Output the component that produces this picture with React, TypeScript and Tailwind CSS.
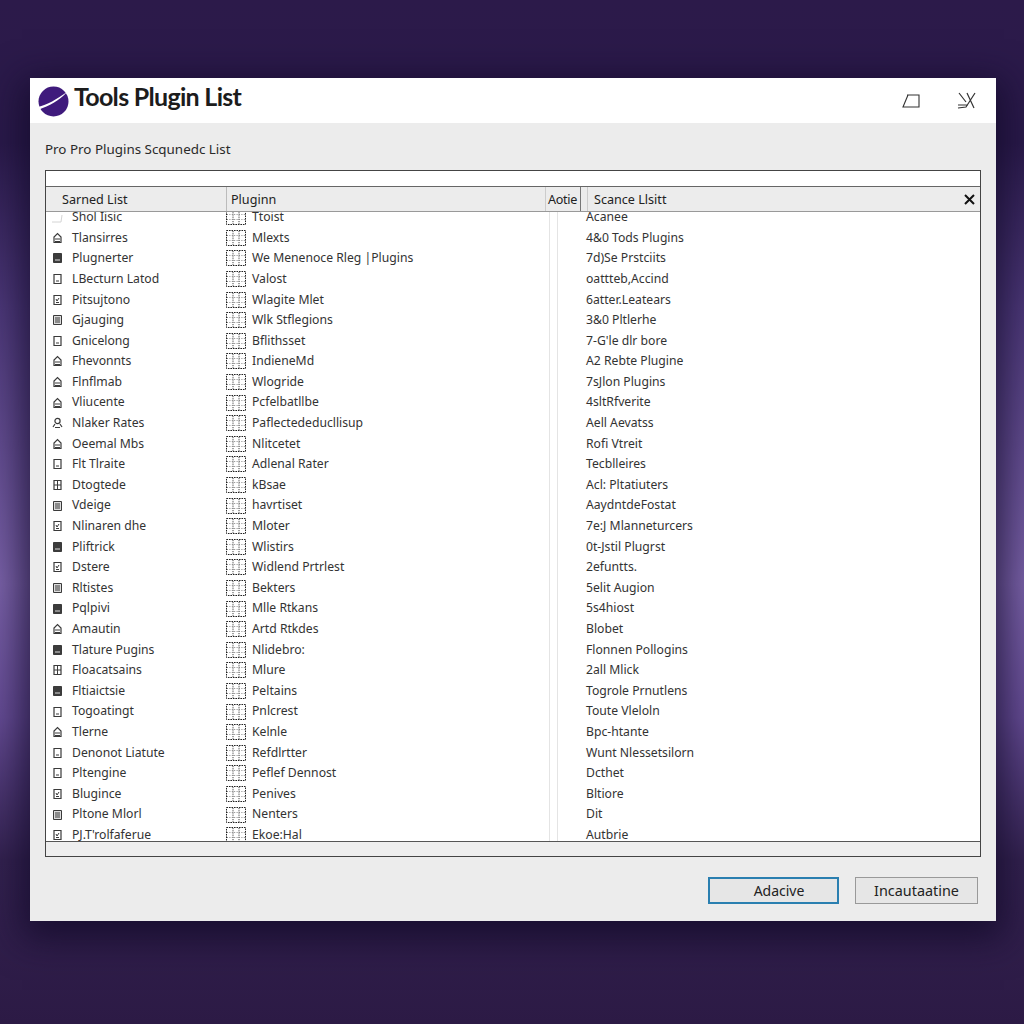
const rows: [string, string, string, string][] = [
  ["Shol Iisic", "Ttoist", "Acanee", "t"],
  ["Tlansirres", "Mlexts", "4&0 Tods Plugins", "a"],
  ["Plugnerter", "We Menenoce Rleg |Plugins", "7d)Se Prstciits", "f"],
  ["LBecturn Latod", "Valost", "oattteb,Accind", "o"],
  ["Pitsujtono", "Wlagite Mlet", "6atter.Leatears", "k"],
  ["Gjauging", "Wlk Stflegions", "3&0 Pltlerhe", "l"],
  ["Gnicelong", "Bflithsset", "7-G'le dlr bore", "o"],
  ["Fhevonnts", "IndieneMd", "A2 Rebte Plugine", "a"],
  ["Flnflmab", "Wlogride", "7sJlon Plugins", "a"],
  ["Vliucente", "Pcfelbatllbe", "4sltRfverite", "a"],
  ["Nlaker Rates", "Paflectededucllisup", "Aell Aevatss", "p"],
  ["Oeemal Mbs", "Nlitcetet", "Rofi Vtreit", "a"],
  ["Flt Tlraite", "Adlenal Rater", "Tecblleires", "o"],
  ["Dtogtede", "kBsae", "Acl: Pltatiuters", "g"],
  ["Vdeige", "havrtiset", "AaydntdeFostat", "l"],
  ["Nlinaren dhe", "Mloter", "7e:J Mlanneturcers", "k"],
  ["Pliftrick", "Wlistirs", "0t-Jstil Plugrst", "f"],
  ["Dstere", "Widlend Prtrlest", "2efuntts.", "k"],
  ["Rltistes", "Bekters", "5elit Augion", "l"],
  ["Pqlpivi", "Mlle Rtkans", "5s4hiost", "f"],
  ["Amautin", "Artd Rtkdes", "Blobet", "a"],
  ["Tlature Pugins", "Nlidebro:", "Flonnen Pollogins", "f"],
  ["Floacatsains", "Mlure", "2all Mlick", "g"],
  ["Fltiaictsie", "Peltains", "Togrole Prnutlens", "f"],
  ["Togoatingt", "Pnlcrest", "Toute Vleloln", "o"],
  ["Tlerne", "Kelnle", "Bpc-htante", "a"],
  ["Denonot Liatute", "Refdlrtter", "Wunt Nlessetsilorn", "o"],
  ["Pltengine", "Peflef Dennost", "Dcthet", "o"],
  ["Blugince", "Penives", "Bltiore", "k"],
  ["Pltone Mlorl", "Nenters", "Dit", "l"],
  ["PJ.T'rolfaferue", "Ekoe:Hal", "Autbrie", "k"],
];

function DocIcon({ kind }: { kind: string }) {
  const s = "#3a3a3a";
  return (
    <svg width="11" height="12" viewBox="0 0 11 12" className="shrink-0">
      {kind === "t" && <path d="M0 11h9L10 4" fill="none" stroke="#d4d4d4" />}
      {kind === "o" && (
        <>
          <path d="M2 1.5h7v9H2z" fill="none" stroke={s} strokeWidth="1.2" />
          <path d="M4 8h3" stroke={s} />
        </>
      )}
      {kind === "a" && (
        <>
          <path d="M2 10.5V5l3.5-3.5L9 5v5.5z" fill="none" stroke={s} strokeWidth="1.2" />
          <path d="M3 7h5M3 9.5h5" stroke={s} />
        </>
      )}
      {kind === "f" && (
        <>
          <path d="M1.5 1.5h8v9h-8z" fill="#3c3c3c" stroke={s} />
          <path d="M3 8h5" stroke="#ddd" />
        </>
      )}
      {kind === "k" && (
        <>
          <path d="M2 1.5h7v9H2z" fill="none" stroke={s} strokeWidth="1.2" />
          <path d="M4 5l1 2 2-3M4 8.5h3" fill="none" stroke={s} />
        </>
      )}
      {kind === "l" && (
        <>
          <path d="M1.5 1.5h8v9h-8z" fill="#dcdcdc" stroke={s} />
          <path d="M3 4h5M3 6h5M3 8h5" stroke={s} />
        </>
      )}
      {kind === "g" && (
        <>
          <path d="M2 1.5h7v9H2z" fill="none" stroke={s} strokeWidth="1.2" />
          <path d="M5.5 2v8M2 6h7" stroke={s} />
        </>
      )}
      {kind === "p" && (
        <>
          <circle cx="5.5" cy="4" r="2.6" fill="none" stroke={s} strokeWidth="1.2" />
          <path d="M1 10l2-3M10 10L8 7M3 10.5h5" fill="none" stroke={s} strokeWidth="1.2" />
        </>
      )}
    </svg>
  );
}

function GridIcon() {
  return (
    <svg width="20" height="16" viewBox="0 0 20 16" className="shrink-0">
      <rect x="0.5" y="0.5" width="19" height="15" fill="none" stroke="#222" strokeDasharray="1.6 0.9" />
      <path d="M7 1v14M13 1v14" stroke="#444" strokeDasharray="1.2 1" />
      <path d="M1 5.5h18M1 10.5h18" stroke="#888" strokeDasharray="1 1.4" />
    </svg>
  );
}

export default function App() {
  return (
    <div className="w-full h-[1024px] overflow-hidden pt-[78px] pl-[30px] bg-[linear-gradient(180deg,#2c1a4a_0%,#2a1a4a_14%,#4c3878_30%,#7a62a8_57%,#654c94_70%,#33224f_84%,#2c1a45_100%)] font-['Noto_Sans','Open_Sans',sans-serif] text-[#2a2a2a]">
      <div className="w-[966px] h-[843px] flex flex-col bg-[#ececec] shadow-[0_10px_34px_8px_rgba(18,10,40,0.75)]">
        <div className="h-[45px] shrink-0 bg-white flex items-center pl-[8px] pr-[19px]">
          <svg width="31" height="31" viewBox="0 0 31 31" className="shrink-0 mt-[1px]">
            <circle cx="15.5" cy="15.5" r="15" fill="#3f1a7c" />
            <path d="M0 21 C9 19 19 13 29 6 C21 15 11 20 1 23.5 Z" fill="#fff" />
          </svg>
          <div className="ml-[5px] mb-[8px] text-[25px] leading-none font-bold tracking-[-0.7px] text-[#1c1c1c] font-['Lato',sans-serif]">
            Tools Plugin List
          </div>
          <div className="ml-auto flex items-center gap-[37px]">
            <svg width="18" height="14" viewBox="0 0 18 14">
              <path d="M5 1h12v12H1L6 1" fill="none" stroke="#333" strokeWidth="1.1" />
            </svg>
            <svg width="20" height="17" viewBox="0 0 20 17">
              <path d="M2 1l7 9M10 1l7 15M18 1L9 15 1 16M1 13h10" fill="none" stroke="#333" strokeWidth="1.2" />
            </svg>
          </div>
        </div>

        <div className="flex-1 flex flex-col px-[15px]">
          <div className="h-[47px] shrink-0 pt-[17px] text-[13.4px] leading-[18px] text-[#2a2a2a]">
            Pro Pro Plugins Scqunedc List
          </div>

          <div className="h-[687px] shrink-0 flex flex-col border border-[#444] bg-white">
            <div className="h-[16px] shrink-0 border-b border-[#666]" />
            <div className="h-[25px] shrink-0 flex items-center bg-[#ececec] border-b border-[#999] text-[12.6px] text-[#222]">
              <div className="w-[181px] pl-[16px] pt-[2px] h-full flex items-center border-r border-[#bbb]">Sarned List</div>
              <div className="w-[318px] pl-[4px] pt-[2px] h-full flex items-center">Pluginn</div>
              <div className="w-[36px] pl-[2px] pt-[2px] h-full flex items-center border-l border-r border-[#ccc] border-r-[#777] tracking-[-0.3px]">Aotie</div>
              <div className="flex-1 h-full flex items-center justify-between pl-[12px] pr-[5px]">
                <span className="pt-[2px] pl-[6px] border-l border-[#ccc] h-full flex items-center -ml-[6px]">Scance Llsitt</span>
                <svg width="11" height="11" viewBox="0 0 11 11">
                  <path d="M1 1l9 9M10 1l-9 9" stroke="#111" strokeWidth="2" />
                </svg>
              </div>
            </div>
            <div className="flex-1 min-h-0 overflow-hidden bg-white text-[12.2px] text-[#333]">
              <div className="-mt-[5px]">
                {rows.map((r, i) => (
                  <div key={i} className="h-[20.6px] flex items-center">
                    <div className="w-[180px] shrink-0 pl-[6px] flex items-center gap-[9px]">
                      <DocIcon kind={r[3]} />
                      <span className="whitespace-nowrap">{r[0]}</span>
                    </div>
                    <div className="w-[323px] shrink-0 flex items-center gap-[6px]">
                      <GridIcon />
                      <span className="whitespace-nowrap">{r[1]}</span>
                    </div>
                    <div className="w-[9px] h-full shrink-0 border-l border-r border-[#e4e4e4]" />
                    <div className="flex-1 pl-[28px] whitespace-nowrap">{r[2]}</div>
                  </div>
                ))}
              </div>
            </div>
            <div className="h-[15px] shrink-0 bg-[#eeeeee] border-t border-[#555]" />
          </div>

          <div className="flex justify-end gap-[16px] pt-[20px] pr-[3px]">
            <button className="w-[131px] h-[27px] pl-[11px] border-2 border-[#2a7fb0] bg-[#e6e6e6] text-[14px] text-[#222]">
              Adacive
            </button>
            <button className="w-[123px] h-[27px] border border-[#999] bg-[#e6e6e6] text-[14.4px] text-[#222]">
              Incautaatine
            </button>
          </div>
        </div>
      </div>
    </div>
  );
}
